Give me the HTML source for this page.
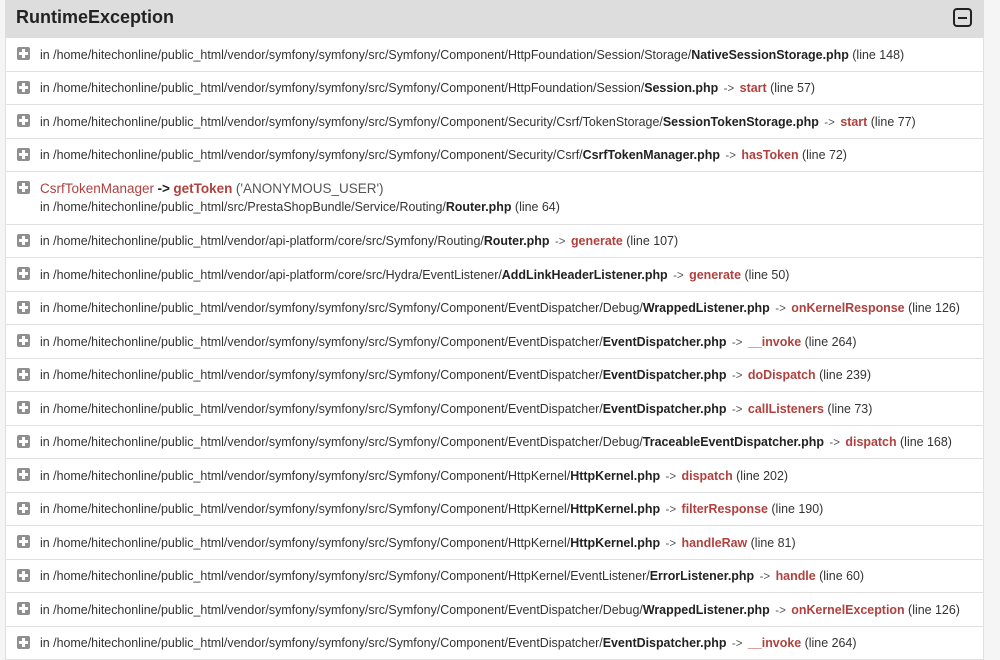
<!DOCTYPE html>
<html><head><meta charset="utf-8"><style>
body{margin:0;background:#f5f5f5;font-family:"Liberation Sans",Arial,sans-serif;font-size:12.45px;color:#333;width:1000px;height:649px;overflow:hidden}
.wrap{position:absolute;left:5px;top:0;width:979px;background:#fff}
.hd{height:38px;background:#ddd;position:relative}
.hd h2{margin:0;position:absolute;left:11px;top:7px;font-size:18px;font-weight:bold;color:#222}
.tog{position:absolute;left:948px;top:8px;width:15px;height:15px;border:2px solid #222;border-radius:4px}
.tog:after{content:"";position:absolute;left:3px;right:3px;top:6.5px;height:2px;background:#222}
.r{height:33.5px;box-sizing:border-box;border-bottom:1px solid #e0e0e0;border-left:1px solid #e0e0e0;border-right:1px solid #e0e0e0;position:relative;white-space:nowrap}
.r .t{position:absolute;left:34px;top:9.5px;line-height:15px}
.ic{position:absolute;left:11px;top:9px;width:13px;height:13px;background:#8f8f8f;border-radius:2px}
.ic:before{content:"";position:absolute;left:5px;top:2px;width:3px;height:9px;background:#fff}
.ic:after{content:"";position:absolute;left:2px;top:5px;width:9px;height:3px;background:#fff}
b{color:#222}
.f{color:#b0413e;font-weight:bold}
.a{color:#555;margin:0 2px;font-size:11.5px}
.big{height:52.5px}
.cl{color:#b0413e;font-size:13.5px}
</style></head><body>
<div class="wrap">
<div class="hd"><h2>RuntimeException</h2><div class="tog"></div></div>
<div class="r"><div class="ic"></div><div class="t">in /home/hitechonline/public_html/vendor/symfony/symfony/src/Symfony/Component/HttpFoundation/Session/Storage/<b>NativeSessionStorage.php</b> (line 148)</div></div>
<div class="r"><div class="ic"></div><div class="t">in /home/hitechonline/public_html/vendor/symfony/symfony/src/Symfony/Component/HttpFoundation/Session/<b>Session.php</b> <span class="a">-&gt;</span> <span class="f">start</span> (line 57)</div></div>
<div class="r"><div class="ic"></div><div class="t">in /home/hitechonline/public_html/vendor/symfony/symfony/src/Symfony/Component/Security/Csrf/TokenStorage/<b>SessionTokenStorage.php</b> <span class="a">-&gt;</span> <span class="f">start</span> (line 77)</div></div>
<div class="r"><div class="ic"></div><div class="t">in /home/hitechonline/public_html/vendor/symfony/symfony/src/Symfony/Component/Security/Csrf/<b>CsrfTokenManager.php</b> <span class="a">-&gt;</span> <span class="f">hasToken</span> (line 72)</div></div>
<div class="r big"><div class="ic"></div><div class="t" style="top:8px;line-height:18px"><span class="cl">CsrfTokenManager</span> <b style="font-size:13.5px">-&gt;</b> <span class="f" style="font-size:13.5px">getToken</span> <span style="font-size:13.5px;color:#555">('ANONYMOUS_USER')</span><br>in /home/hitechonline/public_html/src/PrestaShopBundle/Service/Routing/<b>Router.php</b> (line 64)</div></div>
<div class="r"><div class="ic"></div><div class="t">in /home/hitechonline/public_html/vendor/api-platform/core/src/Symfony/Routing/<b>Router.php</b> <span class="a">-&gt;</span> <span class="f">generate</span> (line 107)</div></div>
<div class="r"><div class="ic"></div><div class="t">in /home/hitechonline/public_html/vendor/api-platform/core/src/Hydra/EventListener/<b>AddLinkHeaderListener.php</b> <span class="a">-&gt;</span> <span class="f">generate</span> (line 50)</div></div>
<div class="r"><div class="ic"></div><div class="t">in /home/hitechonline/public_html/vendor/symfony/symfony/src/Symfony/Component/EventDispatcher/Debug/<b>WrappedListener.php</b> <span class="a">-&gt;</span> <span class="f">onKernelResponse</span> (line 126)</div></div>
<div class="r"><div class="ic"></div><div class="t">in /home/hitechonline/public_html/vendor/symfony/symfony/src/Symfony/Component/EventDispatcher/<b>EventDispatcher.php</b> <span class="a">-&gt;</span> <span class="f">__invoke</span> (line 264)</div></div>
<div class="r"><div class="ic"></div><div class="t">in /home/hitechonline/public_html/vendor/symfony/symfony/src/Symfony/Component/EventDispatcher/<b>EventDispatcher.php</b> <span class="a">-&gt;</span> <span class="f">doDispatch</span> (line 239)</div></div>
<div class="r"><div class="ic"></div><div class="t">in /home/hitechonline/public_html/vendor/symfony/symfony/src/Symfony/Component/EventDispatcher/<b>EventDispatcher.php</b> <span class="a">-&gt;</span> <span class="f">callListeners</span> (line 73)</div></div>
<div class="r"><div class="ic"></div><div class="t">in /home/hitechonline/public_html/vendor/symfony/symfony/src/Symfony/Component/EventDispatcher/Debug/<b>TraceableEventDispatcher.php</b> <span class="a">-&gt;</span> <span class="f">dispatch</span> (line 168)</div></div>
<div class="r"><div class="ic"></div><div class="t">in /home/hitechonline/public_html/vendor/symfony/symfony/src/Symfony/Component/HttpKernel/<b>HttpKernel.php</b> <span class="a">-&gt;</span> <span class="f">dispatch</span> (line 202)</div></div>
<div class="r"><div class="ic"></div><div class="t">in /home/hitechonline/public_html/vendor/symfony/symfony/src/Symfony/Component/HttpKernel/<b>HttpKernel.php</b> <span class="a">-&gt;</span> <span class="f">filterResponse</span> (line 190)</div></div>
<div class="r"><div class="ic"></div><div class="t">in /home/hitechonline/public_html/vendor/symfony/symfony/src/Symfony/Component/HttpKernel/<b>HttpKernel.php</b> <span class="a">-&gt;</span> <span class="f">handleRaw</span> (line 81)</div></div>
<div class="r"><div class="ic"></div><div class="t">in /home/hitechonline/public_html/vendor/symfony/symfony/src/Symfony/Component/HttpKernel/EventListener/<b>ErrorListener.php</b> <span class="a">-&gt;</span> <span class="f">handle</span> (line 60)</div></div>
<div class="r"><div class="ic"></div><div class="t">in /home/hitechonline/public_html/vendor/symfony/symfony/src/Symfony/Component/EventDispatcher/Debug/<b>WrappedListener.php</b> <span class="a">-&gt;</span> <span class="f">onKernelException</span> (line 126)</div></div>
<div class="r"><div class="ic"></div><div class="t">in /home/hitechonline/public_html/vendor/symfony/symfony/src/Symfony/Component/EventDispatcher/<b>EventDispatcher.php</b> <span class="a">-&gt;</span> <span class="f">__invoke</span> (line 264)</div></div>
</div>
</body></html>
